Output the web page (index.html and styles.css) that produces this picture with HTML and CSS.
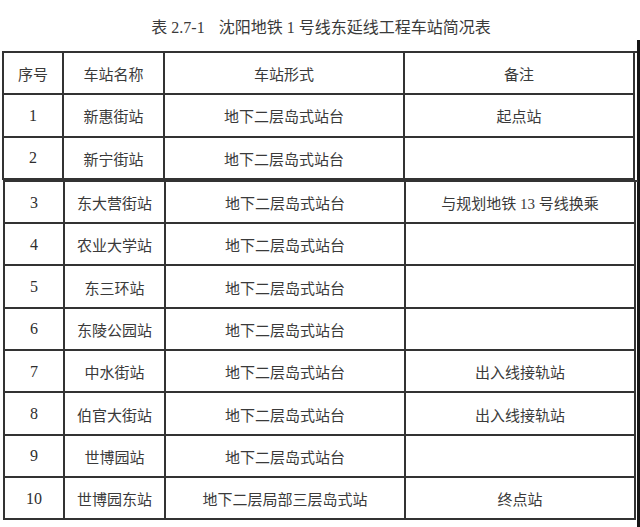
FILE: index.html
```html
<!DOCTYPE html>
<html lang="zh">
<head>
<meta charset="utf-8">
<link rel="stylesheet" href="styles.css">
</head>
<body>
<div class="title">表 2.7-1<span class="gap"></span>沈阳地铁 1 号线东延线工程车站简况表</div>
<div class="content">
  <div class="grid first">
    <div class="cell">序号</div><div class="cell">车站名称</div><div class="cell">车站形式</div><div class="cell">备注</div>
    <div class="cell num">1</div><div class="cell">新惠街站</div><div class="cell">地下二层岛式站台</div><div class="cell">起点站</div>
    <div class="cell num">2</div><div class="cell">新宁街站</div><div class="cell">地下二层岛式站台</div><div class="cell"></div>
  </div>
  <div class="grid second">
    <div class="cell num">3</div><div class="cell">东大营街站</div><div class="cell">地下二层岛式站台</div><div class="cell">与规划地铁 13 号线换乘</div>
    <div class="cell num">4</div><div class="cell">农业大学站</div><div class="cell">地下二层岛式站台</div><div class="cell"></div>
    <div class="cell num">5</div><div class="cell">东三环站</div><div class="cell">地下二层岛式站台</div><div class="cell"></div>
    <div class="cell num">6</div><div class="cell">东陵公园站</div><div class="cell">地下二层岛式站台</div><div class="cell"></div>
    <div class="cell num">7</div><div class="cell">中水街站</div><div class="cell">地下二层岛式站台</div><div class="cell">出入线接轨站</div>
    <div class="cell num">8</div><div class="cell">伯官大街站</div><div class="cell">地下二层岛式站台</div><div class="cell">出入线接轨站</div>
    <div class="cell num">9</div><div class="cell">世博园站</div><div class="cell">地下二层岛式站台</div><div class="cell"></div>
    <div class="cell num">10</div><div class="cell">世博园东站</div><div class="cell">地下二层局部三层岛式站</div><div class="cell">终点站</div>
  </div>
</div>
</body>
</html>
```

FILE: styles.css
```css
html, body {
  margin: 0;
  padding: 0;
  background: #ffffff;
}
body {
  width: 640px;
  height: 527px;
  overflow: hidden;
  font-family: "Liberation Serif", "Noto Sans CJK SC", serif;
  color: #3a3a3a;
}
.title {
  box-sizing: border-box;
  height: 40px;
  padding-top: 16px;
  display: flex;
  align-items: center;
  justify-content: center;
  font-size: 16px;
  line-height: 20px;
  padding-left: 2px;
}
.gap {
  display: inline-block;
  width: 14px;
}
.content {
  box-sizing: border-box;
  width: 640px;
  height: 487px;
  padding-top: 11px;
  border-right: 3px solid #161616;
  display: flex;
  flex-direction: column;
}
.grid {
  display: grid;
  grid-template-columns: 60px 101px 240px 230px;
  grid-auto-rows: 42.3px;
  border-left: 2px solid #333333;
  border-top: 2px solid #333333;
  width: 633px;
}
.first {
  margin-left: 2px;
}
.second {
  margin-left: 3px;
}
.cell {
  box-sizing: border-box;
  border-right: 2px solid #333333;
  border-bottom: 2px solid #333333;
  display: flex;
  align-items: center;
  justify-content: center;
  font-size: 15px;
  padding-top: 1px;
}
.num {
  font-size: 16px;
  color: #2e2e2e;
}
```
